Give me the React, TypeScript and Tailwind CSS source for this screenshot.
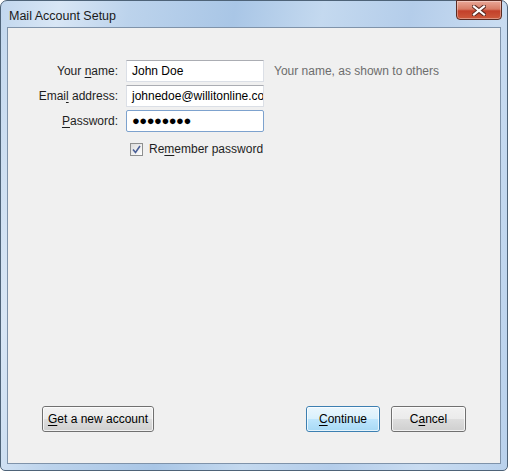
import React from "react";

const font = { fontFamily: '"Liberation Sans", Arial, sans-serif' };

function U({ children }: { children: React.ReactNode }) {
  return <span className="underline underline-offset-2">{children}</span>;
}

function Field({
  label,
  value,
  focused,
  password,
}: {
  label: React.ReactNode;
  value: string;
  focused?: boolean;
  password?: boolean;
}) {
  return (
    <>
      <div className="flex h-[22px] items-center justify-end text-[12px] text-[#1e1e1e]">{label}</div>
      <div
        className={
          "flex h-[22px] w-[138px] items-center overflow-hidden whitespace-nowrap border bg-white pl-[5px] text-[12px] text-black " +
          (focused ? "rounded-[2px] border-[#7da2ce]" : "border-[#dbdfe6] border-t-[#abadb3]")
        }
      >
        {password ? <span className="text-[13px] tracking-[-0.5px]">●●●●●●●●</span> : value}
      </div>
    </>
  );
}

function WinButton({
  children,
  width,
  primary,
}: {
  children: React.ReactNode;
  width: string;
  primary?: boolean;
}) {
  return (
    <button
      className={
        "relative flex h-[26px] items-center justify-center rounded-[3px] border text-[12px] text-black " +
        width +
        (primary
          ? " border-[#3c7fb1] bg-[linear-gradient(#eaf6fd_0%,#d9f0fc_50%,#bee6fd_51%,#a7d9f5_100%)]"
          : " border-[#707070] bg-[linear-gradient(#f2f2f2_0%,#ebebeb_50%,#dddddd_51%,#cfcfcf_100%)]")
      }
    >
      <span className="pointer-events-none absolute inset-0 rounded-[2px] border border-white/70" />
      <span className="relative">{children}</span>
    </button>
  );
}

export default function App() {
  return (
    <div style={font} className="h-[471px] w-[508px] overflow-hidden bg-white">
      <div className="flex h-[471px] w-[508px] flex-col rounded-t-[7px] rounded-b-[5px] border border-[#4e6378] bg-[linear-gradient(100deg,#c2d7ee_0%,#d8e6f5_10%,#bcd3ec_22%,#a9c6e6_40%,#c4d9ef_55%,#b4cdea_70%,#c9dcf1_85%,#b9d1ec_100%)]">
        {/* title bar */}
        <div className="flex h-[26px] items-start justify-between">
          <div className="pl-[8px] pt-[6px] text-[12.5px] text-[#1a1a1a]">Mail Account Setup</div>
          <div className="mr-[5px] mt-[-1px] flex h-[20px] w-[46px] items-center justify-center rounded-b-[4px] border border-[#5a2b22] bg-[linear-gradient(#e9a898_0%,#d77c66_45%,#c3402a_55%,#cd5a3c_100%)] shadow-[inset_0_0_0_1px_rgba(255,255,255,0.35)]">
            <svg width="14" height="11" viewBox="0 0 14 11">
              <path d="M2 1.5 L12 9.5 M12 1.5 L2 9.5" stroke="#5b2a22" strokeWidth="4.2" strokeLinecap="square" />
              <path d="M2 1.5 L12 9.5 M12 1.5 L2 9.5" stroke="#ffffff" strokeWidth="2.2" strokeLinecap="square" />
            </svg>
          </div>
        </div>

        {/* client area */}
        <div className="mx-[6px] mb-[6px] flex flex-1 flex-col border border-[#7f93aa] bg-[#f0f0f0]">
          <div className="pt-[32px]">
            <div className="grid grid-cols-[110px_138px_auto] gap-x-[8px] gap-y-[3px]">
              <Field label={<span>Your <U>n</U>ame:</span>} value="John Doe" />
              <div className="flex h-[22px] items-center pl-[2px] text-[12px] text-[#6d6d6d]">
                Your name, as shown to others
              </div>
              <Field label={<span>Emai<U>l</U> address:</span>} value="johnedoe@willitonline.com" />
              <div />
              <Field label={<span><U>P</U>assword:</span>} value="" focused password />
              <div />
              <div />
              <div className="flex h-[22px] items-center gap-[6px] pl-[4px] pt-[6px] text-[12px] text-[#1e1e1e]">
                <div className="flex h-[13px] w-[13px] items-center justify-center border border-[#8e8f8f] bg-[linear-gradient(135deg,#dcdcdc,#ffffff)]">
                  <svg width="9" height="9" viewBox="0 0 9 9">
                    <path d="M1 4.5 L3.5 7.5 L8 1" fill="none" stroke="#4a5f97" strokeWidth="1.6" />
                  </svg>
                </div>
                <span className="whitespace-nowrap">
                  Re<U>m</U>ember password
                </span>
              </div>
              <div />
            </div>
          </div>

          <div className="mt-auto flex items-center justify-between px-[34px] pb-[31px]">
            <WinButton width="w-[112px]">
              <U>G</U>et a new account
            </WinButton>
            <div className="flex gap-[11px]">
              <WinButton width="w-[74px]" primary>
                <U>C</U>ontinue
              </WinButton>
              <WinButton width="w-[75px]">
                C<U>a</U>ncel
              </WinButton>
            </div>
          </div>
        </div>
      </div>
    </div>
  );
}
